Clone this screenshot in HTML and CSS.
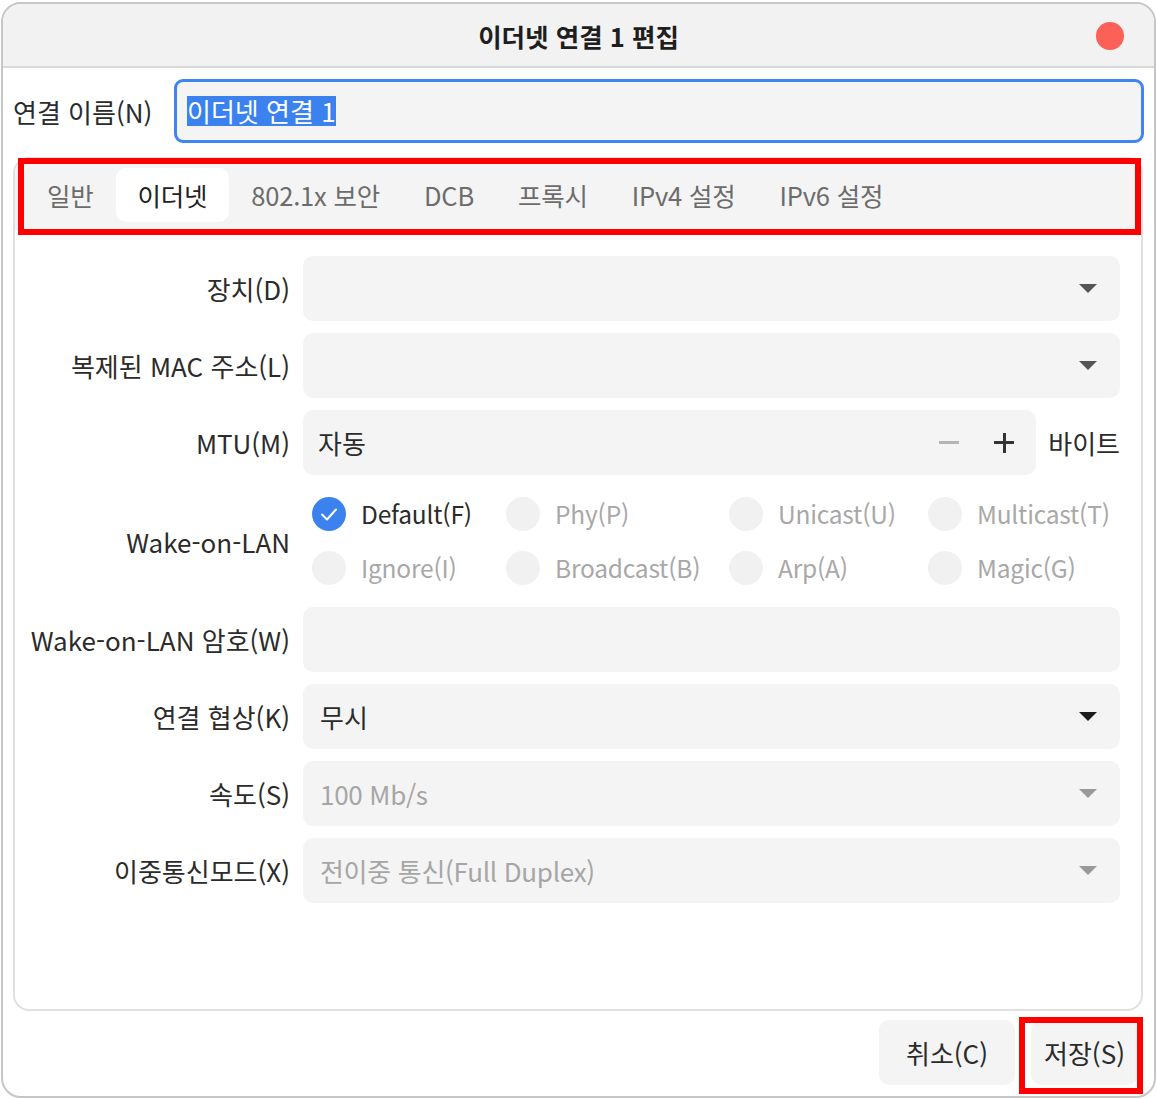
FILE: index.html
```html
<!DOCTYPE html>
<html lang="ko">
<head>
<meta charset="utf-8">
<title>이더넷 연결 1 편집</title>
<link rel="stylesheet" href="styles.css">
</head>
<body>
<div class="window">
  <div class="titlebar">
    <div class="title">이더넷 연결 1 편집</div>
    <span class="close"></span>
  </div>
  <div class="name-row">
    <label class="name-label">연결 이름(N)</label>
    <div class="name-input"><span class="sel">이더넷 연결 1</span></div>
  </div>
  <div class="notebook">
    <div class="tabs">
      <span class="tab">일반</span>
      <span class="tab active">이더넷</span>
      <span class="tab">802.1x 보안</span>
      <span class="tab">DCB</span>
      <span class="tab">프록시</span>
      <span class="tab">IPv4 설정</span>
      <span class="tab">IPv6 설정</span>
      <span class="mark mark-tabs"></span>
    </div>
    <div class="form">
      <div class="label">장치(D)</div>
      <div class="field combo"><span class="val"></span><span class="arrow"></span></div>

      <div class="label">복제된 MAC 주소(L)</div>
      <div class="field combo"><span class="val"></span><span class="arrow"></span></div>

      <div class="label">MTU(M)</div>
      <div class="mtu-wrap">
        <div class="field spin">
          <span class="val">자동</span>
          <span class="minus"></span>
          <span class="plus"></span>
        </div>
        <span class="unit">바이트</span>
      </div>

      <div class="label">Wake-on-LAN</div>
      <div class="radios">
        <div class="radio checked"><span class="dot"><svg width="34" height="34" viewBox="0 0 34 34"><path d="M10 17.5 L15 22.5 L24 12.5" fill="none" stroke="#fff" stroke-width="2" stroke-linecap="round" stroke-linejoin="round"/></svg></span><span class="rl">Default(F)</span></div>
        <div class="radio"><span class="dot"></span><span class="rl">Phy(P)</span></div>
        <div class="radio"><span class="dot"></span><span class="rl">Unicast(U)</span></div>
        <div class="radio"><span class="dot"></span><span class="rl">Multicast(T)</span></div>
        <div class="radio"><span class="dot"></span><span class="rl">Ignore(I)</span></div>
        <div class="radio"><span class="dot"></span><span class="rl">Broadcast(B)</span></div>
        <div class="radio"><span class="dot"></span><span class="rl">Arp(A)</span></div>
        <div class="radio"><span class="dot"></span><span class="rl">Magic(G)</span></div>
      </div>

      <div class="label">Wake-on-LAN 암호(W)</div>
      <div class="field"></div>

      <div class="label">연결 협상(K)</div>
      <div class="field combo"><span class="val">무시</span><span class="arrow dark"></span></div>

      <div class="label">속도(S)</div>
      <div class="field combo disabled"><span class="val">100 Mb/s</span><span class="arrow light"></span></div>

      <div class="label">이중통신모드(X)</div>
      <div class="field combo disabled"><span class="val">전이중 통신(Full Duplex)</span><span class="arrow light"></span></div>
    </div>
  </div>
  <div class="footer">
    <button class="btn cancel">취소(C)</button>
    <button class="btn save">저장(S)<span class="mark mark-save"></span></button>
  </div>
</div>
</body>
</html>
```
FILE: styles.css
```css
* { box-sizing: border-box; }
html, body {
  margin: 0;
  padding: 0;
  background: #ffffff;
}
body {
  font-family: "Noto Sans CJK KR", "Noto Sans", sans-serif;
  color: #2b2b2b;
  width: 1157px;
  height: 1099px;
  overflow: hidden;
}
.window {
  margin: 2px 0 0 1px;
  width: 1155px;
  height: 1096px;
  border: 2px solid #c6c6c6;
  border-radius: 20px;
  overflow: hidden;
  background: #fff;
  display: flex;
  flex-direction: column;
}
.titlebar {
  position: relative;
  height: 64px;
  flex: none;
  background: #f2f2f2;
  border-bottom: 2px solid #d9d9d9;
  display: flex;
  align-items: center;
  justify-content: center;
}
.title {
  font-size: 25.5px;
  font-weight: 700;
  color: #1e1e1e;
}
.close {
  position: absolute;
  right: 30px;
  top: 18px;
  width: 28px;
  height: 28px;
  border-radius: 50%;
  background: #fc6157;
}
.name-row {
  display: flex;
  align-items: center;
  padding: 10px 10px 0 10px;
  height: 76px;
  flex: none;
}
.name-label {
  width: 161px;
  font-size: 26px;
  color: #2b2b2b;
  white-space: nowrap;
}
.name-input {
  flex: 1;
  height: 64px;
  border: 3px solid #3d86f0;
  border-radius: 9px;
  background: #f4f4f4;
  display: flex;
  align-items: center;
  padding-left: 10px;
}
.sel {
  background: #3b82ee;
  color: #fff;
  font-size: 26px;
  line-height: 30px;
}
.notebook {
  position: relative;
  margin: 13px 11px 0 10px;
  height: 854px;
  flex: none;
  border: 2px solid #e0e0e0;
  border-radius: 16px;
  display: flex;
  flex-direction: column;
}
.tabs {
  height: 72px;
  background: #f4f4f4;
  border-radius: 14px 14px 0 0;
  display: flex;
  align-items: center;
  padding-left: 10px;
  flex: none;
}
.tab {
  font-size: 25.5px;
  color: #6c6c6c;
  padding: 0 22px;
  height: 54px;
  line-height: 54px;
  border-radius: 10px;
  white-space: nowrap;
  letter-spacing: -0.2px;
}
.tab.active {
  background: #ffffff;
  color: #222;
}
.mark {
  position: absolute;
  border: 6px solid #ff0000;
  pointer-events: none;
}
.mark-tabs {
  left: 3px;
  top: -1px;
  width: 1123px;
  height: 77px;
}
.form {
  display: grid;
  grid-template-columns: 275px 817px;
  column-gap: 13px;
  row-gap: 12px;
  padding-top: 25px;
}
.label {
  font-size: 26px;
  color: #2b2b2b;
  text-align: right;
  align-self: center;
  white-space: nowrap;
}
.field {
  height: 65px;
  background: #f4f4f4;
  border-radius: 10px;
  display: flex;
  align-items: center;
  padding-left: 17px;
  padding-right: 23px;
  font-size: 26px;
  color: #2b2b2b;
}
.field .val {
  flex: 1;
  white-space: nowrap;
}
.field.disabled .val { color: #a6a6a6; letter-spacing: -0.3px; }
.arrow {
  width: 0;
  height: 0;
  border-left: 9.5px solid transparent;
  border-right: 9.5px solid transparent;
  border-top: 9px solid #555;
}
.arrow.dark { border-top-color: #1c1c1c; }
.arrow.light { border-top-color: #999; }
.mtu-wrap {
  display: flex;
  align-items: center;
}
.spin {
  width: 734px;
  padding-left: 15px;
  padding-right: 22px;
}
.minus {
  width: 20px;
  height: 3px;
  background: #b4b4b4;
  margin-right: 35px;
}
.plus {
  position: relative;
  width: 20px;
  height: 20px;
}
.plus::before, .plus::after {
  content: "";
  position: absolute;
  background: #333;
}
.plus::before { left: 0; top: 8.5px; width: 20px; height: 3px; }
.plus::after { left: 8.5px; top: 0; width: 3px; height: 20px; }
.unit {
  margin-left: 12px;
  font-size: 26px;
  color: #2b2b2b;
  white-space: nowrap;
}
.radios {
  display: grid;
  grid-template-columns: 194px 223px 199px 1fr;
  grid-template-rows: 53px 55px;
  padding-left: 9px;
  height: 108px;
}
.radio {
  display: flex;
  align-items: center;
}
.dot {
  width: 34px;
  height: 34px;
  border-radius: 50%;
  background: #f1f1f1;
  flex: none;
}
.dot svg { display: block; }
.radio.checked .dot { background: #3b82ee; }
.rl {
  margin-left: 15px;
  font-size: 24.5px;
  color: #a8a8a8;
  white-space: nowrap;
  letter-spacing: -0.2px;
}
.radio.checked .rl { color: #2b2b2b; }
.footer {
  display: flex;
  justify-content: flex-end;
  align-items: flex-start;
  padding-top: 9px;
  padding-right: 16px;
  gap: 16px;
}
.btn {
  position: relative;
  height: 65px;
  border: none;
  border-radius: 10px;
  background: #f4f4f4;
  font-family: "Noto Sans CJK KR", "Noto Sans", sans-serif;
  font-size: 26px;
  color: #2b2b2b;
  padding: 0;
}
.cancel { width: 136px; }
.save { width: 107px; }
.mark-save {
  left: -12px;
  top: -3px;
  width: 124px;
  height: 77px;
}
```
